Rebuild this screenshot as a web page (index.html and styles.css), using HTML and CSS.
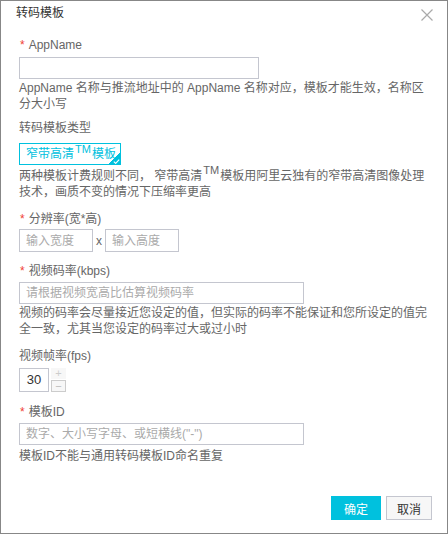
FILE: index.html
```html
<!DOCTYPE html>
<html lang="zh-CN">
<head>
    <meta charset="UTF-8">
    <title>转码模板</title>
    <link rel="stylesheet" href="styles.css">
</head>
<body>
    <div class="dialog">
        <div class="dialog-header">
            <span class="dialog-title">转码模板</span>
            <svg class="close" viewBox="0 0 12 12">
                <path d="M0.5 0.5L11.5 11.5M11.5 0.5L0.5 11.5"/>
            </svg>
        </div>

        <div class="dialog-body">
            <div class="form-item item-app">
                <div class="label"><span class="req">*</span>AppName</div>
                <input class="input input-md" type="text">
                <div class="help">AppName 名称与推流地址中的 AppName 名称对应，模板才能生效，名称区分大小写</div>
            </div>

            <div class="form-item item-type">
                <div class="label">转码模板类型</div>
                <div class="tag">窄带高清<sup>TM</sup>模板
                    <span class="tag-check">
                        <svg viewBox="0 0 8 6"><path d="M0.8 3.2L3 5.2L7.2 0.8"/></svg>
                    </span>
                </div>
                <div class="help">两种模板计费规则不同， 窄带高清<sup>TM</sup>模板用阿里云独有的窄带高清图像处理技术，画质不变的情况下压缩率更高</div>
            </div>

            <div class="form-item item-res">
                <div class="label"><span class="req">*</span>分辨率(宽*高)</div>
                <div class="res-row">
                    <input class="input input-sm" type="text" placeholder="输入宽度">
                    <span class="times">x</span>
                    <input class="input input-sm" type="text" placeholder="输入高度">
                </div>
            </div>

            <div class="form-item item-rate">
                <div class="label"><span class="req">*</span>视频码率(kbps)</div>
                <input class="input input-lg" type="text" placeholder="请根据视频宽高比估算视频码率">
                <div class="help">视频的码率会尽量接近您设定的值，但实际的码率不能保证和您所设定的值完全一致，尤其当您设定的码率过大或过小时</div>
            </div>

            <div class="form-item item-fps">
                <div class="label">视频帧率(fps)</div>
                <div class="number">
                    <span class="number-value">30</span>
                    <div class="number-btns">
                        <span class="number-btn up">+</span>
                        <span class="number-btn down">−</span>
                    </div>
                </div>
            </div>

            <div class="form-item item-id">
                <div class="label"><span class="req">*</span>模板ID</div>
                <input class="input input-lg" type="text" placeholder='数字、大小写字母、或短横线("-")'>
                <div class="help">模板ID不能与通用转码模板ID命名重复</div>
            </div>
        </div>

        <div class="dialog-footer">
            <button class="btn btn-primary">确定</button>
            <button class="btn btn-normal">取消</button>
        </div>
    </div>
</body>
</html>
```

FILE: styles.css
```css
* {
    margin: 0;
    padding: 0;
    box-sizing: border-box;
}

body {
    background: #fff;
    font-family: "Liberation Sans", "Noto Sans CJK SC", sans-serif;
    font-size: 12px;
    color: #666;
}

.dialog {
    width: 448px;
    height: 534px;
    border: 1px solid #878787;
    display: flex;
    flex-direction: column;
}

.dialog-header {
    height: 20px;
    padding: 4px 14px 0 15px;
    display: flex;
    justify-content: space-between;
    align-items: center;
}

.dialog-title {
    color: #333;
    font-size: 12px;
    line-height: 16px;
}

.close {
    width: 12px;
    height: 12px;
    margin-top: 4px;
    stroke: #aaa;
    stroke-width: 1.2;
    fill: none;
}

.dialog-body {
    padding: 16px 16px 0 18px;
}

.form-item {
    margin-bottom: 11px;
}

.item-app {
    margin-bottom: 8px;
}

.label {
    line-height: 16px;
    margin-bottom: 4px;
    color: #666;
}

.req {
    color: #f04134;
    margin: 0 4px 0 1px;
}

.input {
    display: block;
    height: 22px;
    border: 1px solid #c4c6cf;
    padding: 0 6px;
    font-family: inherit;
    font-size: 12px;
    color: #333;
    outline: none;
}

.input::placeholder {
    color: #aaa;
}

.input-md { width: 240px; }
.input-lg { width: 285px; }
.input-sm { width: 75px; height: 23px; }

.help {
    margin-top: 1px;
    line-height: 16px;
    color: #666;
}

sup {
    font-size: 11px;
    line-height: 0;
    vertical-align: 6px;
    margin: 0 1px;
}

.item-type .label {
    margin-bottom: 7px;
}

.tag {
    position: relative;
    display: inline-block;
    width: 102px;
    height: 22px;
    border: 1px solid #00c1de;
    color: #00c1de;
    line-height: 20px;
    padding-left: 6px;
    vertical-align: top;
}

.tag sup {
    vertical-align: 5px;
}

.tag-check {
    position: absolute;
    right: -1px;
    bottom: -1px;
    width: 13px;
    height: 13px;
    background: linear-gradient(135deg, transparent 50%, #00c1de 50%);
}

.tag-check svg {
    position: absolute;
    right: 1px;
    bottom: 1px;
    width: 7px;
    height: 5px;
    stroke: #fff;
    stroke-width: 1.4;
    fill: none;
}

.item-type .help {
    margin-top: 3px;
}

.item-res .label {
    margin-bottom: 2px;
}

.res-row {
    display: flex;
    align-items: center;
    gap: 3px;
}

.input-sm {
    width: 74px;
}

.times {
    color: #666;
}

.item-rate .label {
    margin-bottom: 3px;
}

.number {
    display: flex;
    gap: 2px;
}

.number-value {
    width: 30px;
    height: 24px;
    border: 1px solid #c4c6cf;
    color: #333;
    font-size: 13px;
    text-align: center;
    line-height: 22px;
}

.number-btns {
    display: flex;
    flex-direction: column;
    gap: 1px;
}

.number-btn {
    width: 15px;
    height: 11px;
    font-size: 11px;
    line-height: 10px;
    text-align: center;
    color: #ccc;
    background: #f7f7f7;
}

.number-btn.down {
    border: 1px solid #ccc;
    height: 12px;
    color: #bbb;
}

.item-fps {
    margin-bottom: 12px;
}

.item-id .label {
    margin-bottom: 3px;
}

.item-id .help {
    margin-top: 3px;
}

.dialog-footer {
    margin-top: auto;
    padding: 0 15px 13px 0;
    display: flex;
    justify-content: flex-end;
    gap: 5px;
}

.btn {
    height: 24px;
    border: 1px solid transparent;
    font-family: inherit;
    font-size: 12px;
}

.btn-primary {
    width: 50px;
    background: #00c1de;
    color: #fff;
}

.btn-normal {
    width: 46px;
    background: #f7f7f7;
    border-color: #c4c6cf;
    color: #333;
}
```
